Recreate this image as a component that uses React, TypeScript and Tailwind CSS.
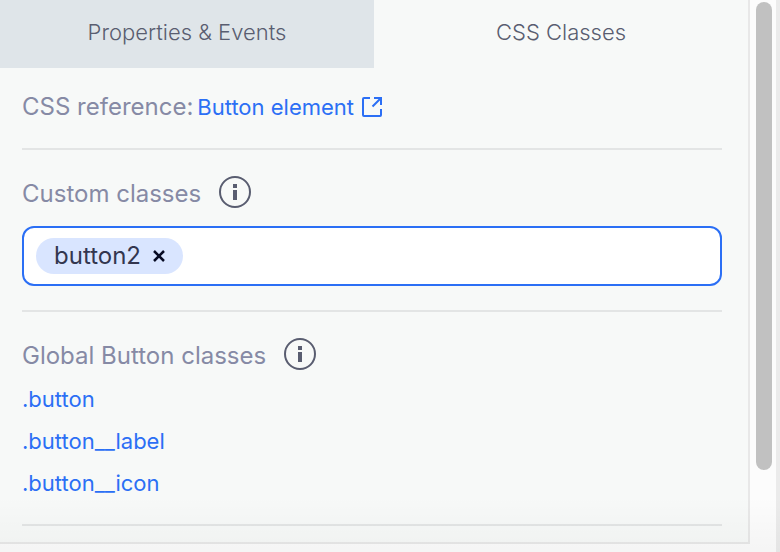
import React, { useState } from 'react';

const globalClasses = ['.button', '.button__label', '.button__icon'];

interface InfoButtonProps {
  label: string;
}

const InfoButton = ({ label }: InfoButtonProps) => (
  <button type="button" aria-label={label} className="shrink-0 text-[#595d70]">
    <svg className="block h-8 w-8" viewBox="0 0 32 32" fill="none">
      <circle cx="16" cy="16" r="15" stroke="currentColor" strokeWidth="2" />
      <path d="M14 8h4v4h-4zM14 14h4v10h-4z" fill="currentColor" />
    </svg>
  </button>
);

const ExternalIcon = () => (
  <svg className="block h-5 w-5" viewBox="0 0 20 20" fill="none" stroke="currentColor" strokeWidth="2">
    <path d="M8 1H2a1 1 0 0 0-1 1v16a1 1 0 0 0 1 1h16a1 1 0 0 0 1-1v-6" />
    <path d="M12 1h7v7M19 1l-8.5 8.5" />
  </svg>
);

const App = () => {
  const [tab, setTab] = useState('css');
  const [classes, setClasses] = useState(['button2']);
  const [draft, setDraft] = useState('');

  // Add the typed class on Enter
  const handleKeyDown = (e: React.KeyboardEvent<HTMLInputElement>) => {
    if (e.key === 'Enter' && draft.trim()) {
      setClasses([...classes, draft.trim()]);
      setDraft('');
    }
  };

  const removeClass = (name: string) => {
    setClasses(classes.filter((item) => item !== name));
  };

  const tabs = [
    { id: 'props', title: 'Properties & Events' },
    { id: 'css', title: 'CSS Classes' },
  ];

  return (
    <div className="relative flex h-screen overflow-hidden bg-[#fcfcfc] font-['Inter',sans-serif] text-[22px]">
      <main className="min-w-0 flex-1 self-start border-r-2 border-b-2 border-[#e8e8e8] bg-[#f7f9f8] pb-4">
        {/* Tabs */}
        <div role="tablist" className="flex">
          {tabs.map(({ id, title }) => (
            <button
              key={id}
              type="button"
              role="tab"
              aria-selected={tab === id}
              onClick={() => setTab(id)}
              className={`h-17 flex-1 pb-1 font-light text-[#595d70] ${tab === id ? '' : 'bg-[#dfe5e9]'}`}
            >
              {title}
            </button>
          ))}
        </div>

        <div className="pr-[26px] pl-[22px]">
          {/* Reference link */}
          <section className="flex h-[82px] items-center gap-1 border-b-2 border-[#e3e5e5] pb-[2px]">
            <span className="text-2xl text-[#868aa5]">CSS reference:</span>
            <a href="#reference" className="flex items-center gap-2 text-[#2b6ff5]">
              Button element
              <ExternalIcon />
            </a>
          </section>

          {/* Custom classes */}
          <section className="border-b-2 border-[#e3e5e5] pt-[26px] pb-6">
            <div className="flex h-8 items-center gap-[18px]">
              <label htmlFor="custom-classes" className="pt-1 text-2xl text-[#868aa5]">
                Custom classes
              </label>
              <InfoButton label="About custom classes" />
            </div>
            <div className="mt-[18px] flex h-15 items-center gap-2 rounded-xl border-2 border-[#2b6ff5] bg-white px-3">
              {classes.map((name) => (
                <span
                  key={name}
                  className="flex h-9 items-center gap-3 rounded-full bg-[#d9e5ff] px-[18px] text-2xl text-[#33364f]"
                >
                  {name}
                  <button
                    type="button"
                    aria-label={`Remove ${name}`}
                    onClick={() => removeClass(name)}
                    className="text-[#070b24]"
                  >
                    <svg className="block h-3 w-3" viewBox="0 0 12 12" stroke="currentColor" strokeWidth="2.5">
                      <path d="M1 1l10 10M11 1L1 11" />
                    </svg>
                  </button>
                </span>
              ))}
              <input
                id="custom-classes"
                type="text"
                value={draft}
                onChange={(e) => setDraft(e.target.value)}
                onKeyDown={handleKeyDown}
                className="min-w-0 flex-1 bg-transparent text-2xl text-[#33364f] outline-none"
              />
            </div>
          </section>

          {/* Global classes */}
          <section className="border-b-2 border-[#e3e5e5] pt-[26px] pb-5">
            <div className="flex h-8 items-center gap-[18px]">
              <h2 className="pt-1 text-2xl text-[#868aa5]">Global Button classes</h2>
              <InfoButton label="About global button classes" />
            </div>
            <ul className="mt-2">
              {globalClasses.map((name) => (
                <li key={name} className="flex h-[42px] items-center">
                  <a href={`#${name.slice(1)}`} className="text-[#2b6ff5]">
                    {name}
                  </a>
                </li>
              ))}
            </ul>
          </section>
        </div>
      </main>

      {/* Scrollbar */}
      <div className="w-[30px] shrink-0 border-r-4 border-[#ebebeb] pt-[2px] pl-[6px]">
        <div className="h-[85%] w-4 rounded-full bg-[#c1c1c1]" />
      </div>

      <div className="pointer-events-none absolute inset-x-0 bottom-0 h-14 bg-gradient-to-t from-black/3 to-transparent" />
    </div>
  );
};

export default App;
